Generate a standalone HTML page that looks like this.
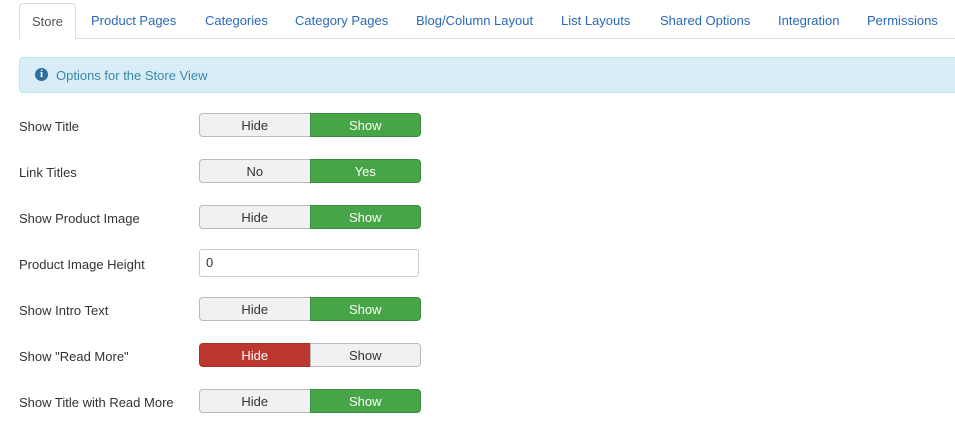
<!DOCTYPE html>
<html><head><style>
body{margin:0;width:955px;height:442px;overflow:hidden;background:#fff;font-family:"Liberation Sans",sans-serif;font-size:13px;color:#333;position:relative}
.tabline{position:absolute;left:19px;right:0;top:38px;border-top:1px solid #ddd}
.tab{position:absolute;top:13px;color:#2a69b8;font-size:13px;white-space:nowrap}
.store{position:absolute;left:19px;top:3px;width:55px;height:35px;border:1px solid #ddd;border-bottom:1px solid #fff;border-radius:4px 4px 0 0;background:#fff;color:#555;text-align:center;line-height:36px;box-sizing:content-box;z-index:2}
.alert{position:absolute;left:19px;top:57px;width:950px;height:34px;background:#d9edf7;border:1px solid #bce8f1;border-radius:4px;color:#3a87ad;line-height:35px}
.alert .i{position:absolute;left:15px;top:10px;width:13px;height:13px;border-radius:50%;background:#2f6f9f;color:#fff;font-size:11px;font-weight:bold;line-height:13px;text-align:center;font-family:"Liberation Serif",serif}
.alert span.t{position:absolute;left:36px}
.lbl{position:absolute;left:19px}
.grp{position:absolute;left:199px;width:222px;height:24px;display:flex}
.grp div{flex:1;text-align:center;line-height:24px;border:1px solid #bbb;background:#f1f1f1;color:#333}
.grp div:first-child{border-radius:4px 0 0 4px;border-right:none}
.grp div:last-child{border-radius:0 4px 4px 0}
.grp .g{background:#46a546;border-color:#3d8b3d;color:#fff}
.grp .r{background:#bd362f;border-color:#a9302a;color:#fff}
.inp{position:absolute;left:199px;top:249px;border:1px solid #ccc;border-radius:3px;line-height:26px;padding-left:6px;box-sizing:border-box;width:220px;height:28px}
</style></head><body>
<div class="tabline"></div>
<div class="store">Store</div>
<div class="tab" style="left:91px">Product Pages</div>
<div class="tab" style="left:205px">Categories</div>
<div class="tab" style="left:295px">Category Pages</div>
<div class="tab" style="left:416px">Blog/Column Layout</div>
<div class="tab" style="left:561px">List Layouts</div>
<div class="tab" style="left:660px">Shared Options</div>
<div class="tab" style="left:778px">Integration</div>
<div class="tab" style="left:867px">Permissions</div>
<div class="alert"><span class="i">i</span><span class="t">Options for the Store View</span></div>

<div class="lbl" style="top:119px">Show Title</div>
<div class="grp" style="top:113px"><div>Hide</div><div class="g">Show</div></div>
<div class="lbl" style="top:165px">Link Titles</div>
<div class="grp" style="top:159px"><div>No</div><div class="g">Yes</div></div>
<div class="lbl" style="top:211px">Show Product Image</div>
<div class="grp" style="top:205px"><div>Hide</div><div class="g">Show</div></div>
<div class="lbl" style="top:257px">Product Image Height</div>
<div class="inp">0</div>
<div class="lbl" style="top:303px">Show Intro Text</div>
<div class="grp" style="top:297px"><div>Hide</div><div class="g">Show</div></div>
<div class="lbl" style="top:349px">Show "Read More"</div>
<div class="grp" style="top:343px"><div class="r">Hide</div><div>Show</div></div>
<div class="lbl" style="top:395px">Show Title with Read More</div>
<div class="grp" style="top:389px"><div>Hide</div><div class="g">Show</div></div>
</body></html>
